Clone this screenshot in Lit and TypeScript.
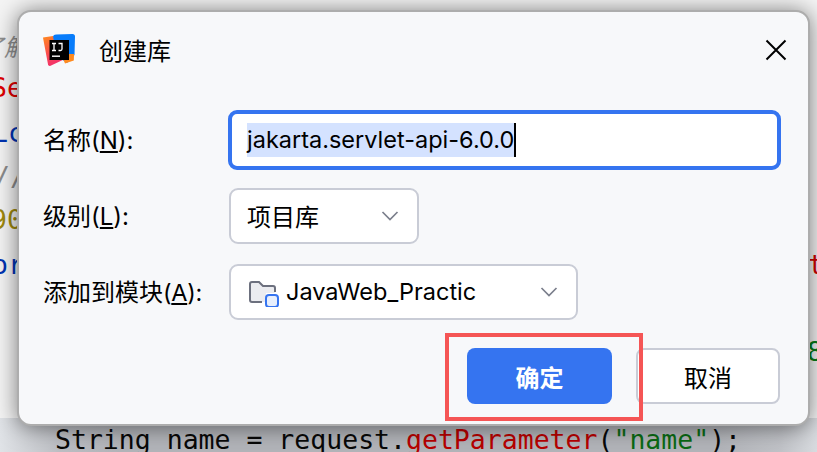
import { LitElement, html, css } from "lit";
import { customElement } from "lit/decorators.js";

const chevron = html`<svg class="chev" width="18" height="10" viewBox="0 0 18 10"><path d="M1.5 1l7.5 7.5L16.5 1" fill="none" stroke="#7b7f8c" stroke-width="1.7"/></svg>`;

@customElement("app-root")
export class AppRoot extends LitElement {
  static styles = css`
    :host { display: block; position: relative; width: 817px; height: 452px; overflow: hidden;
      font-family: Inter, "Noto Sans CJK SC", sans-serif; color: #000; background: #f4f4f4; }
    .band { position: absolute; left: 0; right: 0; top: 418px; bottom: 0;
      background: linear-gradient(90deg, #e0e3e7 0, #bcbec3 60px, #b2b4b9 120px, #b2b4b9 720px, #c0c2c7 780px, #d8dbdf 817px); }
    .code { position: absolute; font-family: "DejaVu Sans Mono", monospace; font-size: 26.5px; line-height: 30px; white-space: pre; color: #080808; }
    .c1 { left: -20px; top: 31px; color: #8f8f8f; font-style: italic; font-family: "Noto Sans CJK SC", sans-serif; font-size: 24px; }
    .c2 { left: -9px; top: 73px; color: #e00000; }
    .c3 { left: -8px; top: 118px; color: #0033b3; }
    .c4 { left: -6px; top: 162px; color: #8c8c8c; }
    .c5 { left: -9px; top: 205px; color: #9e880d; }
    .c6 { left: -8px; top: 250px; color: #0033b3; }
    .c7 { left: 808px; top: 250px; color: #d00000; }
    .c8 { left: 807px; top: 337px; color: #067d17; }
    .c9 { left: 55px; top: 425px; }
    .red { color: #b80000; } .green { color: #0a6a14; }

    .dialog { position: absolute; left: 17px; top: 10px; width: 793px; height: 416px; box-sizing: border-box;
      background: #f7f8fa; border: 2px solid #adadad; border-radius: 14px; padding: 22px 24px 0 24px;
      box-shadow: 0 1px 22px rgba(0,0,0,.5);
      display: flex; flex-direction: column; }
    .title { display: flex; align-items: center; height: 32px; font-size: 24px; }
    .title svg.logo { margin-right: 24px; flex: none; }
    .title span { padding-bottom: 2px; }
    .close { margin-left: auto; margin-right: -3px; display: block; }
    .form { display: flex; flex-direction: column; margin-top: 44px; }
    .row { display: flex; align-items: center; font-size: 24px; }
    .label { width: 185px; flex: none; padding-bottom: 4px; box-sizing: border-box; }
    .lat { font-size: 23.5px; }
    .tight { letter-spacing: -0.3px; }
    .input { width: 553px; height: 60px; box-sizing: border-box; border: 4px solid #3574f0; border-radius: 9px;
      background: #fff; display: flex; align-items: center; padding-left: 15px; }
    .sel { background: #d4e2ff; height: 34px; line-height: 34px; font-size: 23.5px; }
    .caret { width: 2px; height: 34px; background: #000; }
    .select { margin-left: 1px; box-sizing: border-box; height: 56px; border: 2px solid #c9ccd6; border-radius: 9px; background: #fff;
      display: flex; align-items: center; padding: 0 18px 0 16px; }
    .s1 { width: 190px; } .s2 { width: 349px; }
    .select span { padding-bottom: 2px; }
    .r2 { margin-top: 18px; } .r3 { margin-top: 20px; }
    .chev { margin-left: auto; }
    .folder { margin-right: 6px; flex: none; }
    .actions { display: flex; justify-content: flex-end; gap: 24px; margin-top: 28px; padding-right: 4px; }
    .btn { box-sizing: border-box; width: 145px; height: 56px; border-radius: 8px; font-size: 24px; display: flex; align-items: center; justify-content: center; }
    .ok { background: #3574f0; color: #fff; font-weight: 700; }
    .cancel { width: 144px; background: #fff; border: 2px solid #c9ccd6; }
    .mark { position: absolute; left: 445px; top: 333px; width: 198px; height: 88px; box-sizing: border-box; border: 4px solid #f55555; }
  `;

  render() {
    return html`
      <div class="band"></div>
      <div class="code c1">了解</div>
      <div class="code c2">Se</div>
      <div class="code c3">Lc</div>
      <div class="code c4">//</div>
      <div class="code c5">90</div>
      <div class="code c6">or</div>
      <div class="code c7">t</div>
      <div class="code c8">8</div>
      <div class="code c9">String name = request.<span class="red">getParameter</span>(<span class="green">"name"</span>);</div>
      <div class="dialog">
        <div class="title">
          <svg class="logo" width="32" height="32" viewBox="0 0 32 32">
            <defs>
              <linearGradient id="g1" x1="0" y1="0" x2="0.4" y2="1"><stop offset="0" stop-color="#ff8a1e"/><stop offset="0.6" stop-color="#fb4a50"/><stop offset="1" stop-color="#f2316b"/></linearGradient>
            </defs>
            <path d="M0 3.5L10 2 L24 24 L7 32 Q5.5 32 5 30.5Z" fill="url(#g1)"/>
            <path d="M10 2.5Q10.5 0.5 13 0.5L29.5 0Q32 0 32 2.5L31.5 21 L24 29 L14 22Z" fill="#087cfa"/>
            <path d="M18 20L31 20 L30.8 26.5 L22 29.5Z" fill="#ff8a1e"/>
            <rect x="6.5" y="6" width="19.5" height="20" fill="#000"/>
            <rect x="9" y="21.5" width="8" height="1.4" fill="#fff"/>
            <path d="M9 9.5h4M11 9.5v7M9 16.5h4M15.5 9.5h3.5v5.5q0 1.5-1.5 1.5h-2" fill="none" stroke="#fff" stroke-width="1.3"/>
          </svg>
          <span>创建库</span>
          <svg class="close" width="22" height="22" viewBox="0 0 22 22"><path d="M1.5 1.5l19 19M20.5 1.5l-19 19" stroke="#000" stroke-width="2" fill="none"/></svg>
        </div>
        <div class="form">
          <div class="row">
            <div class="label">名称(<u>N</u>):</div>
            <div class="input"><span class="sel">jakarta.servlet-api-6.0.0</span><span class="caret"></span></div>
          </div>
          <div class="row r2">
            <div class="label">级别(<u>L</u>):</div>
            <div class="select s1"><span>项目库</span>${chevron}</div>
          </div>
          <div class="row r3">
            <div class="label">添加到模块<span class="lat tight">(<u>A</u>):</span></div>
            <div class="select s2">
              <svg class="folder" width="33" height="30" viewBox="0 0 33 30">
                <path d="M15 25H5Q3 25 3 23V7Q3 5 5 5H12L16 9H26Q28 9 28 11V16H19V25Z" fill="#ebecf0"/>
                <path d="M15 25H5Q3 25 3 23V7Q3 5 5 5H12L16 9H26Q28 9 28 11V15" fill="none" stroke="#6c707e" stroke-width="2"/>
                <rect x="19" y="18" width="12" height="12" rx="3" fill="#e7effd" stroke="#3574f0" stroke-width="2"/>
              </svg>
              <span class="lat">JavaWeb_Practic</span>${chevron}
            </div>
          </div>
        </div>
        <div class="actions">
          <div class="btn ok">确定</div>
          <div class="btn cancel">取消</div>
        </div>
      </div>
      <div class="mark"></div>
    `;
  }
}
